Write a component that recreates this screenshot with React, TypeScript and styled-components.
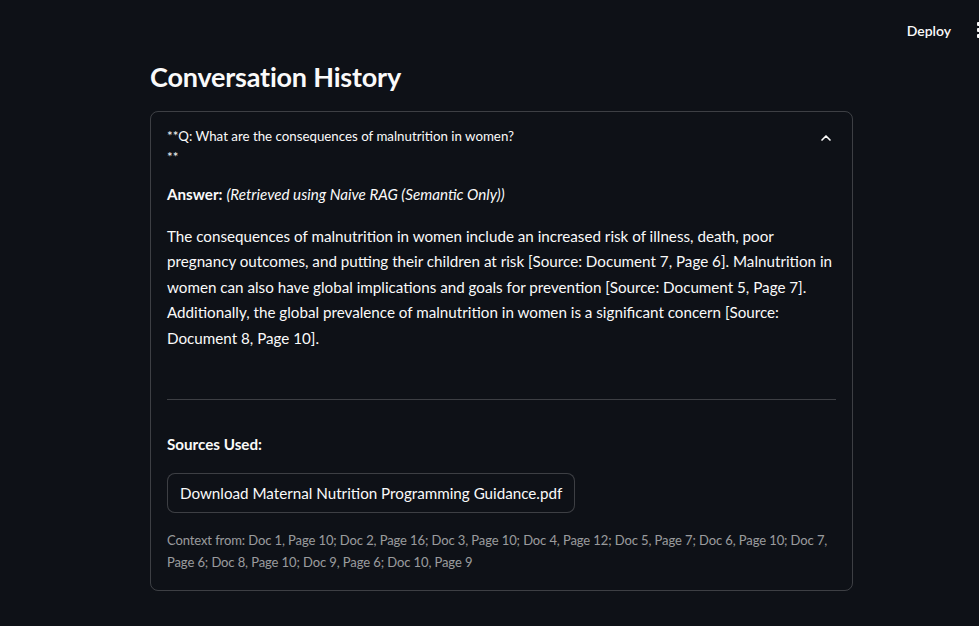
import React from "react";
import styled, { createGlobalStyle } from "styled-components";

const Global = createGlobalStyle`
  html, body { margin: 0; padding: 0; background: #0e1117; }
  body { font-family: Lato, "Noto Sans", sans-serif; color: #fafafa; }
  * { box-sizing: border-box; }
`;

const Page = styled.div`
  width: 979px;
  height: 626px;
  background: #0e1117;
  position: relative;
  overflow: hidden;
`;

const TopBar = styled.header`
  height: 60px;
  display: flex;
  align-items: center;
  justify-content: flex-end;
  gap: 26px;
`;

const DeployButton = styled.button`
  background: transparent;
  border: none;
  color: #fafafa;
  font-family: inherit;
  font-size: 14px;
  font-weight: 600;
  padding: 0;
`;

const Kebab = styled.div`
  width: 8px;
  display: flex;
  flex-direction: column;
  gap: 2px;
  margin-right: -6px;
  span { width: 4px; height: 4px; background: #fafafa; border-radius: 1px; }
`;

const Main = styled.main`
  width: 703px;
  margin: -1px 0 0 150px;
`;

const Title = styled.h2`
  margin: 0 0 16px;
  font-size: 27px;
  font-weight: 700;
  line-height: 36px;
  letter-spacing: -0.2px;
`;

const Expander = styled.section`
  border: 1px solid rgba(250, 250, 250, 0.2);
  border-radius: 8px;
`;

const Header = styled.div`
  display: flex;
  justify-content: space-between;
  align-items: flex-start;
  padding: 14px 16px 0 16px;
  font-size: 13.3px;
  line-height: 21px;
`;

const Chevron = styled.svg`
  margin: 4px 2px 0 0;
`;

const Body = styled.div`
  padding: 14px 16px 17px 16px;
`;

const P = styled.p`
  margin: 0 0 16px;
  font-size: 15.2px;
  line-height: 25.6px;
  b { font-weight: 700; }
  i { font-style: italic; }
`;

const Divider = styled.hr`
  border: none;
  border-top: 1px solid rgba(250, 250, 250, 0.2);
  margin: 47px 0 32px;
`;

const DownloadButton = styled.button`
  display: inline-flex;
  align-items: center;
  height: 40px;
  padding: 0 12px;
  border: 1px solid rgba(250, 250, 250, 0.2);
  border-radius: 8px;
  background: #0e1117;
  color: #fafafa;
  font-family: inherit;
  font-size: 15.2px;
  margin: 0 0 16px;
`;

const Caption = styled.div`
  font-size: 13px;
  line-height: 22px;
  letter-spacing: -0.1px;
  color: rgba(250, 250, 250, 0.6);
`;

export default function App() {
  return (
    <Page>
      <Global />
      <TopBar>
        <DeployButton>Deploy</DeployButton>
        <Kebab>
          <span />
          <span />
          <span />
        </Kebab>
      </TopBar>
      <Main>
        <Title>Conversation History</Title>
        <Expander>
          <Header>
            <div>
              **Q: What are the consequences of malnutrition in women?
              <br />
              **
            </div>
            <Chevron width="16" height="16" viewBox="0 0 24 24" fill="none" stroke="#fafafa" strokeWidth="2.5" strokeLinecap="round" strokeLinejoin="round">
              <path d="M6 15l6-6 6 6" />
            </Chevron>
          </Header>
          <Body>
            <P>
              <b>Answer:</b> <i>(Retrieved using Naive RAG (Semantic Only))</i>
            </P>
            <P>
              The consequences of malnutrition in women include an increased risk of illness, death, poor
              pregnancy outcomes, and putting their children at risk [Source: Document 7, Page 6]. Malnutrition in
              women can also have global implications and goals for prevention [Source: Document 5, Page 7].
              Additionally, the global prevalence of malnutrition in women is a significant concern [Source:
              Document 8, Page 10].
            </P>
            <Divider />
            <P>
              <b>Sources Used:</b>
            </P>
            <DownloadButton>Download Maternal Nutrition Programming Guidance.pdf</DownloadButton>
            <Caption>
              Context from: Doc 1, Page 10; Doc 2, Page 16; Doc 3, Page 10; Doc 4, Page 12; Doc 5, Page 7; Doc 6, Page 10; Doc 7,
              Page 6; Doc 8, Page 10; Doc 9, Page 6; Doc 10, Page 9
            </Caption>
          </Body>
        </Expander>
      </Main>
    </Page>
  );
}
